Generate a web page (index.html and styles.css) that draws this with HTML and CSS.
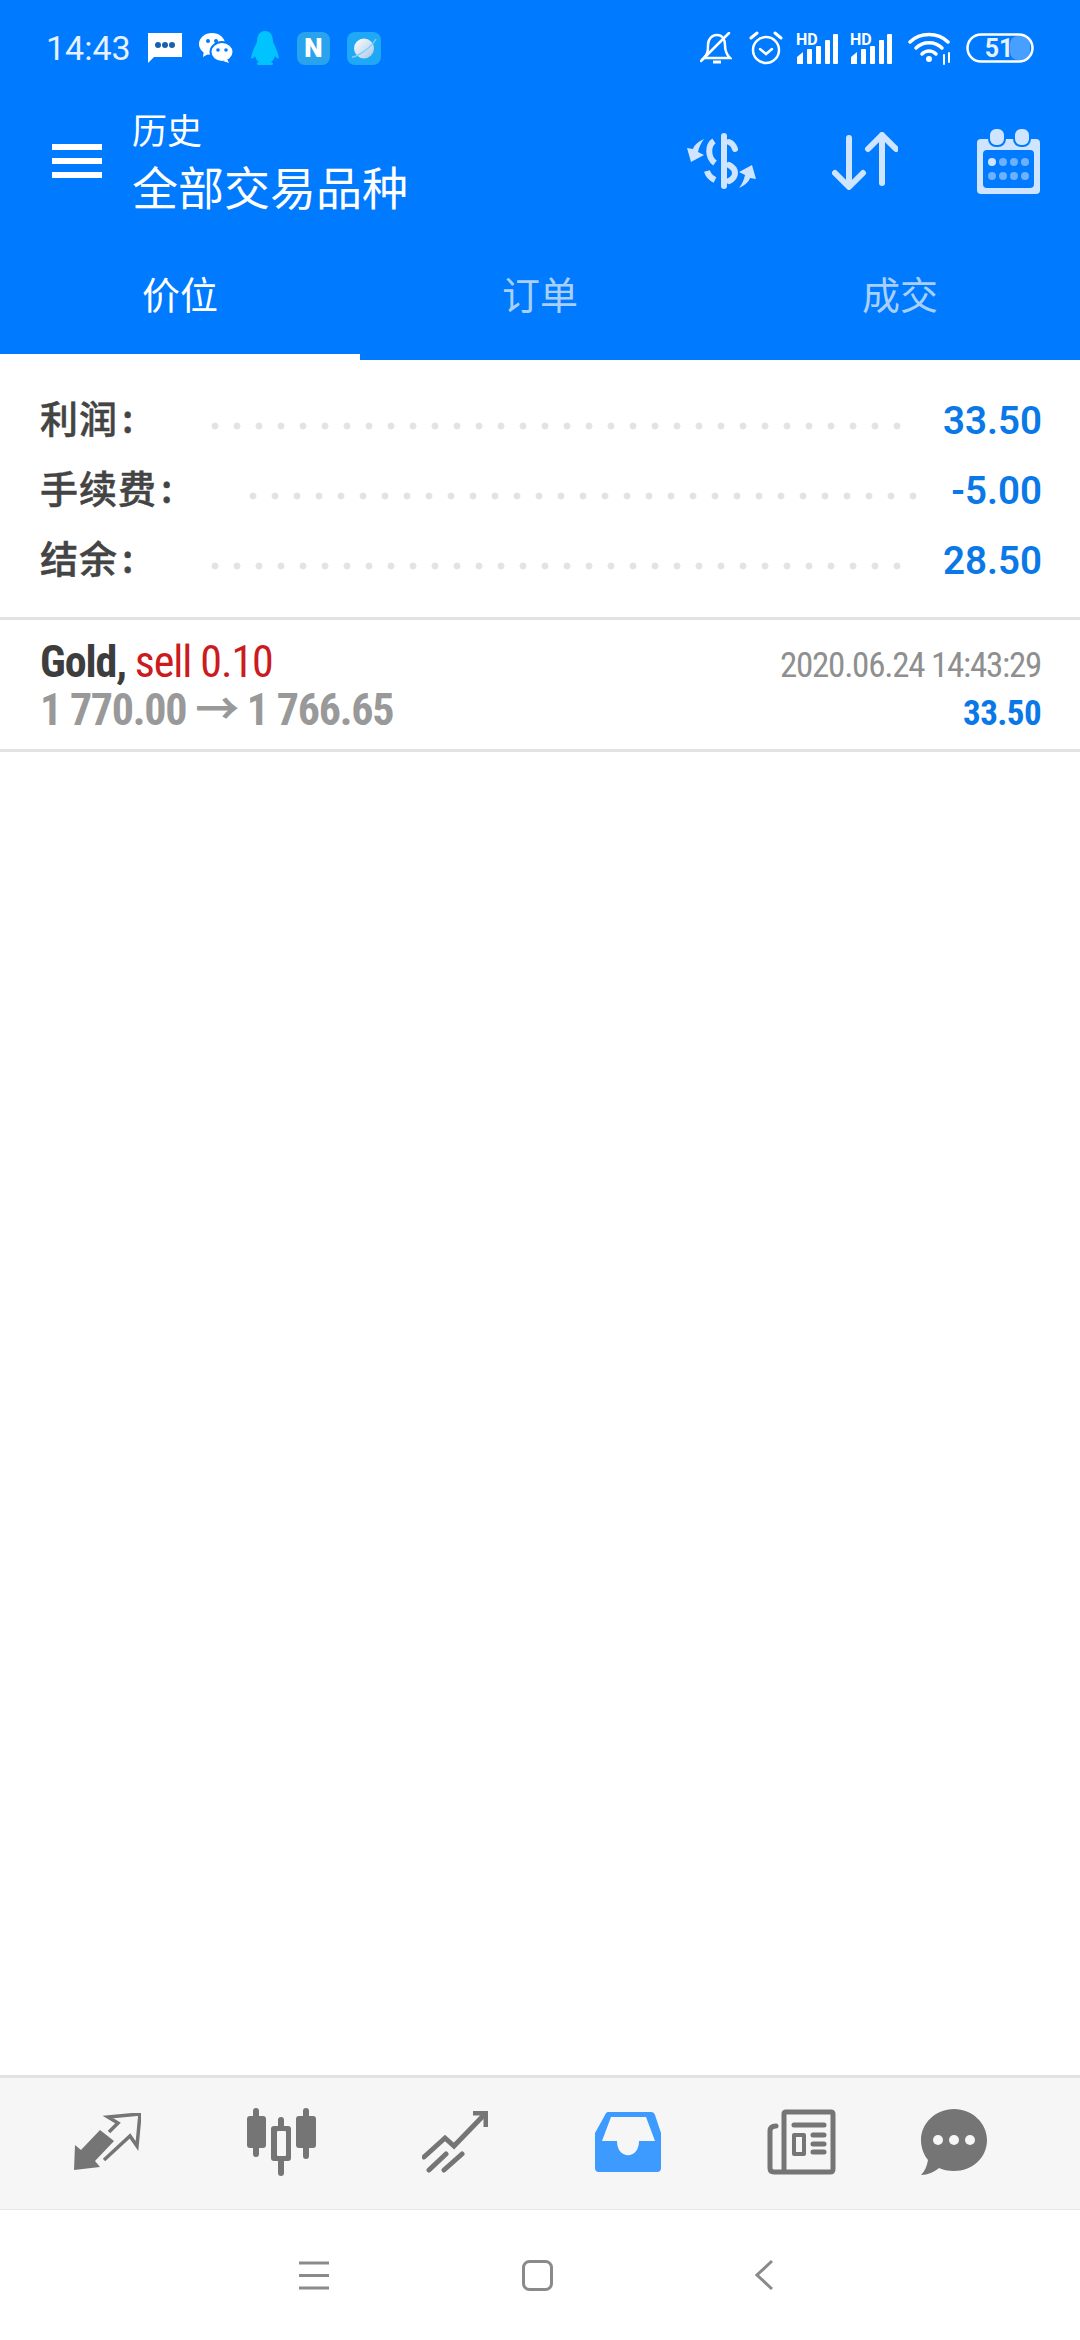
FILE: index.html
```html
<!DOCTYPE html>
<html lang="zh">
<head>
    <meta charset="UTF-8">
    <title>历史</title>
    <link rel="stylesheet" href="styles.css">
</head>
<body>
<div class="page">

<header class="header">
    <div class="status-bar">
        <div class="status-left">
            <span class="clock">14:43</span>
            <svg width="34" height="30" viewBox="0 0 34 30"><path d="M0 0H34V24H6L0 30Z" fill="#fff"/><circle cx="10" cy="12" r="3" fill="#1a5fb0"/><circle cx="17" cy="12" r="3" fill="#1a5fb0"/><circle cx="24" cy="12" r="3" fill="#1a5fb0"/></svg>
            <svg width="34" height="30" viewBox="0 0 34 30"><ellipse cx="13" cy="11" rx="13" ry="11" fill="#fff"/><path d="M5 17L4 24L11 20Z" fill="#fff"/><ellipse cx="23" cy="19" rx="11.5" ry="10" fill="#fff" stroke="#007aff" stroke-width="2"/><path d="M28 26L30 30L24 28Z" fill="#fff"/><circle cx="9" cy="8" r="2" fill="#007aff"/><circle cx="17" cy="8" r="2" fill="#007aff"/><circle cx="19" cy="17" r="1.8" fill="#007aff"/><circle cx="27" cy="17" r="1.8" fill="#007aff"/></svg>
            <svg width="30" height="34" viewBox="0 0 30 34"><path d="M15 0C9 0 7 5 7 11C5 15 2 21 1 27C2 28 4 27 5 25C6 28 7 30 9 31C6 32 6 34 10 34H20C24 34 24 32 21 31C23 30 24 28 25 25C26 27 28 28 29 27C28 21 25 15 23 11C23 5 21 0 15 0Z" fill="#00c3ff"/></svg>
            <svg width="33" height="33" viewBox="0 0 33 33"><rect width="33" height="33" rx="8" fill="#2aa3ee"/><text x="16.5" y="25" class="app-letter">N</text></svg>
            <svg width="34" height="33" viewBox="0 0 34 33"><defs><linearGradient id="globe" x1="0" y1="0" x2="1" y2="1"><stop offset="0" stop-color="#fff"/><stop offset="1" stop-color="#a9c6e6"/></linearGradient></defs><rect width="34" height="33" rx="8" fill="#1fa8f5"/><circle cx="17" cy="16.5" r="10" fill="url(#globe)"/><path d="M5 25C10 25 24 16 29 7" stroke="#7fd0fa" stroke-width="1.5" fill="none"/></svg>
        </div>
        <div class="status-right">
            <svg class="st-bell" width="32" height="32" viewBox="0 0 32 32" fill="none" stroke="#fff" stroke-width="2.5"><path d="M4 26C8 22 8 18 8 13C8 7 12 3 17 3C22 3 25 7 25 13C25 18 26 22 30 26Z"/><path d="M1 29L29 1" stroke-linecap="round"/><path d="M13 30H21" stroke-width="3"/></svg>
            <svg width="36" height="34" viewBox="0 0 36 34" fill="none" stroke="#fff" stroke-width="2.5" stroke-linecap="round"><circle cx="18" cy="19" r="13"/><path d="M12 18L18 23L24 18"/><path d="M3 7L9 2M33 7L27 2" stroke-width="3"/></svg>
            <svg class="st-signal" width="42" height="37" viewBox="0 -6 42 37"><text x="0" y="12" class="hd-text">HD</text><rect x="1" y="24" width="6" height="7" fill="#fff"/><path d="M1 24L7 19V24Z" fill="#fff"/><rect x="11" y="16" width="5" height="15" rx="1" fill="#fff"/><rect x="20" y="13" width="5" height="18" rx="1" fill="#fff"/><rect x="29" y="7" width="5" height="24" rx="1" fill="#fff"/><rect x="37" y="1" width="5" height="30" rx="1" fill="#fff"/></svg>
            <svg class="st-signal" width="42" height="37" viewBox="0 -6 42 37"><text x="0" y="12" class="hd-text">HD</text><rect x="1" y="24" width="6" height="7" fill="#fff"/><path d="M1 24L7 19V24Z" fill="#fff"/><rect x="11" y="16" width="5" height="15" rx="1" fill="#fff"/><rect x="20" y="13" width="5" height="18" rx="1" fill="#fff"/><rect x="29" y="7" width="5" height="24" rx="1" fill="#fff"/><rect x="37" y="1" width="5" height="30" rx="1" fill="#fff"/></svg>
            <svg class="st-wifi" width="44" height="34" viewBox="0 0 44 34" fill="none" stroke="#fff" stroke-width="3.5" stroke-linecap="round"><path d="M2 11C12 1 30 1 40 11"/><path d="M8 17C15 10 27 10 34 17"/><path d="M14 23C18 19 24 19 28 23"/><circle cx="21" cy="28" r="3" fill="#fff" stroke="none"/><path d="M36 24V33M41 22V31" stroke-width="2"/></svg>
            <svg width="68" height="30" viewBox="0 0 68 30"><rect x="44" y="3" width="20" height="24" rx="8" fill="#fff" opacity="0.28"/><rect x="1.5" y="1.5" width="65" height="27" rx="13.5" fill="none" stroke="#fff" stroke-width="2.5"/><text x="33" y="24" class="battery-text">51</text></svg>
        </div>
    </div>

    <div class="toolbar">
        <div class="menu-btn"><span></span><span></span><span></span></div>
        <div class="title-box">
            <div class="title-small">历史</div>
            <div class="title-big">全部交易品种</div>
        </div>
        <div class="tool-icons">
            <svg class="tool-rate" width="73" height="56" viewBox="0 0 73 56" fill="none" stroke="#cfe4ff" stroke-width="6" stroke-linecap="round"><path d="M39 3V53"/><path d="M44 9C47 10 49 13 50 16"/><path d="M29 8C23 12 22 24 30 30" stroke-linecap="butt"/><path d="M44 32C52 36 52 44 44 48"/><path d="M22 38C23 42 26 45 30 47" stroke-linecap="butt"/><path d="M19 6C12 9 9 13 8 16L2 15L6 29L19 22L13 19C14 14 16 10 19 6Z" fill="#cfe4ff" stroke="none"/><path d="M54 55C61 52 64 48 65 45L71 46L67 32L54 39L60 42C59 47 57 51 54 55Z" fill="#cfe4ff" stroke="none"/></svg>
            <svg width="66" height="58" viewBox="0 0 66 58" fill="none" stroke="#cfe4ff" stroke-width="6" stroke-linecap="round" stroke-linejoin="round"><path d="M17 6V54M3 41L17 55L31 41"/><path d="M50 3V51M36 17L50 3L64 17"/></svg>
            <svg width="63" height="65" viewBox="0 0 63 65"><rect y="10" width="63" height="55" rx="4" fill="#cfe4ff"/><rect x="6" y="21" width="51" height="38" rx="4" fill="#007aff"/><rect x="12" y="-1" width="16" height="18" rx="7" fill="#cfe4ff" stroke="#007aff" stroke-width="2"/><rect x="37" y="-1" width="16" height="18" rx="7" fill="#cfe4ff" stroke="#007aff" stroke-width="2"/><circle cx="15" cy="33" r="4" fill="#cfe4ff"/><circle cx="26" cy="33" r="4" fill="#6db0fb"/><circle cx="37" cy="33" r="4" fill="#6db0fb"/><circle cx="48" cy="33" r="4" fill="#6db0fb"/><circle cx="15" cy="47" r="4" fill="#6db0fb"/><circle cx="26" cy="47" r="4" fill="#6db0fb"/><circle cx="37" cy="47" r="4" fill="#6db0fb"/><circle cx="48" cy="47" r="4" fill="#6db0fb"/></svg>
        </div>
    </div>

    <div class="tabs">
        <div class="tab active">价位</div>
        <div class="tab">订单</div>
        <div class="tab">成交</div>
    </div>
</header>

<main class="content">
    <section class="summary">
        <div class="sum-row">
            <span class="sum-label">利润<span class="colon">:</span></span>
            <span class="dots"></span>
            <span class="sum-value">33.50</span>
        </div>
        <div class="sum-row">
            <span class="sum-label">手续费<span class="colon">:</span></span>
            <span class="dots dots-short"></span>
            <span class="sum-value">-5.00</span>
        </div>
        <div class="sum-row">
            <span class="sum-label">结余<span class="colon">:</span></span>
            <span class="dots"></span>
            <span class="sum-value">28.50</span>
        </div>
    </section>

    <section class="trade">
        <div class="trade-line">
            <span class="cond symbol">Gold, <span class="sell">sell 0.10</span></span>
            <span class="cond trade-date">2020.06.24 14:43:29</span>
        </div>
        <div class="trade-line">
            <span class="cond prices">1 770.00 → 1 766.65</span>
            <span class="cond trade-profit">33.50</span>
        </div>
    </section>
</main>

<nav class="bottom-nav">
    <div class="nav-item">
        <svg width="67" height="58" viewBox="0 0 67 58"><path d="M0 57L1 32L7 37L26 17L40 28L21 48L26 54Z" fill="#757575"/><path d="M30 47L56 23L63 33L66 1L34 4L44 10L35 19" fill="none" stroke="#757575" stroke-width="3.5"/></svg>
    </div>
    <div class="nav-item">
        <svg width="69" height="68" viewBox="0 0 69 68"><path d="M9 3V46M34 12V65M59 3V48" stroke="#757575" stroke-width="6" stroke-linecap="round"/><rect y="8" width="19" height="32" rx="3" fill="#757575"/><rect x="49" y="8" width="20" height="32" rx="3" fill="#757575"/><rect x="24" y="18" width="20" height="35" rx="3" fill="#757575"/><rect x="30" y="23" width="9" height="25" rx="1" fill="#f6f6f6"/></svg>
    </div>
    <div class="nav-item">
        <svg width="66" height="62" viewBox="0 0 66 62" fill="none" stroke="#757575" stroke-width="5" stroke-linecap="round"><path d="M2 46L23 27L32 35L62 4"/><path d="M51 2H64V16" stroke-linecap="butt"/><path d="M7 59L24 43M22 59L40 43"/></svg>
    </div>
    <div class="nav-item">
        <svg width="66" height="60" viewBox="0 0 66 60"><path d="M13 0H56Q59 0 60 3L66 21V56Q66 60 62 60H4Q0 60 0 56V21L10 3Q11 0 13 0Z" fill="#3d9bff"/><path d="M16 5H51L60 29H44C44 48 22 48 22 29H7Z" fill="#f6f6f6"/></svg>
    </div>
    <div class="nav-item">
        <svg width="69" height="66" viewBox="0 0 69 66" fill="none" stroke="#757575" stroke-width="5" stroke-linecap="round" stroke-linejoin="round"><path d="M17 62V5Q17 3 19 3H64Q66 3 66 5V60Q66 63 63 63H7Q3 63 3 59V22Q3 17 9 17"/><path d="M27 16H57M46 26H57M46 35H57M46 43H57"/><rect x="27" y="26" width="10" height="19" stroke-width="4"/></svg>
    </div>
    <div class="nav-item">
        <svg width="66" height="66" viewBox="0 0 66 66"><path d="M33 0C51 0 66 14 66 31C66 49 51 62 33 62C27 62 22 61 18 59C13 63 7 66 0 66C4 62 6 57 7 51C3 46 0 39 0 31C0 14 15 0 33 0Z" fill="#757575"/><circle cx="17" cy="31" r="5" fill="#f6f6f6"/><circle cx="33" cy="31" r="5" fill="#f6f6f6"/><circle cx="49" cy="31" r="5" fill="#f6f6f6"/></svg>
    </div>
</nav>

<div class="system-nav">
    <svg width="30" height="29" viewBox="0 0 30 29"><path d="M0 2H30M0 14.5H30M0 27H30" stroke="#8a8a8a" stroke-width="3"/></svg>
    <svg class="nav-home" width="31" height="31" viewBox="0 0 31 31"><rect x="1.5" y="1.5" width="28" height="28" rx="6" fill="none" stroke="#8a8a8a" stroke-width="3"/></svg>
    <svg width="19" height="32" viewBox="0 0 19 32"><path d="M17 2L2 16L17 30" fill="none" stroke="#8a8a8a" stroke-width="3"/></svg>
</div>

</div>
</body>
</html>
```

FILE: styles.css
```css
* {
    box-sizing: border-box;
}

body {
    margin: 0;
    font-family: Roboto, "Noto Sans CJK SC", sans-serif;
    background-color: #fff;
}

.page {
    width: 1080px;
    height: 2340px;
    display: flex;
    flex-direction: column;
}

.header {
    background-color: #007aff;
    color: #fff;
    height: 360px;
}

.status-bar {
    height: 96px;
    display: flex;
    justify-content: space-between;
    align-items: center;
    padding: 0 46px;
}

.status-left {
    display: flex;
    align-items: center;
    gap: 17px;
}

.status-right {
    display: flex;
    align-items: center;
    gap: 12px;
}

.st-bell {
    margin-right: 4px;
}

.st-signal {
    margin-bottom: 6px;
}

.st-wifi {
    margin: 0 2px 0 4px;
}

.clock {
    font-size: 34px;
    width: 85px;
    color: #e6f1ff;
}

.app-letter {
    font-family: Roboto, sans-serif;
    font-size: 26px;
    font-weight: 900;
    fill: #fff;
    text-anchor: middle;
}

.hd-text {
    font-family: Roboto, sans-serif;
    font-size: 16px;
    font-weight: 700;
    fill: #fff;
}

.battery-text {
    font-family: Roboto, sans-serif;
    font-size: 25px;
    font-weight: 700;
    fill: #e6f1ff;
    text-anchor: middle;
}

.toolbar {
    height: 130px;
    display: flex;
    align-items: center;
    padding: 0 40px 0 52px;
}

.menu-btn {
    width: 50px;
    display: flex;
    flex-direction: column;
    gap: 8px;
}

.menu-btn span {
    display: block;
    height: 6px;
    background-color: #fff;
}

.title-box {
    margin-left: 30px;
    font-family: "Noto Sans CJK SC", sans-serif;
    flex: 1;
}

.title-small {
    font-size: 35px;
    line-height: 48px;
}

.title-big {
    font-size: 46px;
    line-height: 64px;
}

.tool-icons {
    display: flex;
    align-items: center;
    gap: 79px;
}

.tool-rate {
    margin-right: -5px;
}

.tabs {
    height: 134px;
    padding-top: 22px;
    display: flex;
}

.tab {
    flex: 1;
    text-align: center;
    font-family: "Noto Sans CJK SC", sans-serif;
    font-size: 38px;
    line-height: 90px;
    color: #a9d0fd;
}

.tab.active {
    color: #fff;
    border-bottom: 6px solid #fff;
}

.content {
    flex: 1;
}

.summary {
    height: 260px;
    padding-top: 24px;
    border-bottom: 3px solid #e2e2e2;
}

.sum-row {
    height: 70px;
    display: flex;
    align-items: center;
    padding: 0 38px 0 40px;
}

.sum-label {
    flex: none;
    width: 164px;
    margin-bottom: 6px;
    font-family: "Noto Sans CJK SC", sans-serif;
    font-size: 38px;
    font-weight: 500;
    letter-spacing: 1px;
    color: #444;
    -webkit-text-stroke: 0.5px #444;
}

.colon {
    margin-left: 4px;
}

.dots {
    flex: none;
    width: 704px;
    height: 8px;
    margin-top: 14px;
    background-image: radial-gradient(circle, #e3e3e3 3.2px, transparent 3.8px);
    background-size: 22px 8px;
    background-repeat: repeat-x;
}

.dots-short {
    width: 682px;
    margin-left: 38px;
}

.sum-value {
    margin-left: auto;
    margin-top: 2px;
    font-size: 38.5px;
    font-weight: 600;
    color: #0a78e6;
}

.trade {
    height: 132px;
    padding: 18px 39px 0 40px;
    border-bottom: 3px solid #e2e2e2;
}

.trade-line {
    height: 48px;
    display: flex;
    justify-content: space-between;
    align-items: baseline;
}

.cond {
    font-stretch: 75%;
    line-height: 48px;
    white-space: nowrap;
}

.symbol {
    font-size: 44px;
    font-weight: 700;
    letter-spacing: -1.1px;
    color: #3d3d3d;
}

.sell {
    font-weight: 400;
    color: #cc1b1f;
}

.prices {
    font-size: 44px;
    font-weight: 700;
    letter-spacing: -1.25px;
    color: #999;
}

.trade-date {
    font-size: 35px;
    letter-spacing: -1.25px;
    color: #8f8f8f;
}

.trade-profit {
    font-size: 35px;
    font-weight: 700;
    letter-spacing: -0.6px;
    color: #0a78e6;
}

.bottom-nav {
    height: 135px;
    background-color: #f6f6f6;
    border-top: 3px solid #e2e2e2;
    border-bottom: 1px solid #e6e6e6;
    padding-left: 21px;
    display: grid;
    grid-template-columns: repeat(5, 173.5px) 130px;
    align-items: center;
    justify-items: center;
}

.system-nav {
    height: 130px;
    display: flex;
    align-items: center;
    padding: 0 306px 0 299px;
    justify-content: space-between;
}

.nav-home {
    margin-right: 9px;
}
```
